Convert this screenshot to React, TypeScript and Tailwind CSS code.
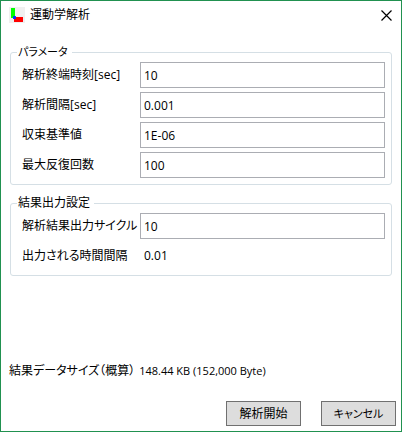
import { useState } from 'react';
import type { ReactNode } from 'react';

const parameterFields = [
  { id: 'endTime', label: '解析終端時刻[sec]', value: '10' },
  { id: 'interval', label: '解析間隔[sec]', value: '0.001' },
  { id: 'tolerance', label: '収束基準値', value: '1E-06' },
  { id: 'maxIterations', label: '最大反復回数', value: '100' },
];

function AppIcon() {
  return (
    <svg width="16" height="16" viewBox="0 0 16 16" aria-hidden="true">
      <rect width="16" height="16" fill="#f0f0f0" />
      <rect x="2" y="1" width="4" height="10" fill="#00ff00" />
      <rect x="5" y="10" width="9" height="5" fill="#ff0000" />
      <rect x="4" y="9" width="3" height="3" rx="0.5" fill="#0033ff" />
    </svg>
  );
}

function GroupBox({ title, children }: { title: ReactNode; children: ReactNode }) {
  return (
    <fieldset className="min-w-0 rounded-[3px] border border-[#d5dfe5] px-1.5 pt-0.5 pb-1.5">
      <legend className="pr-1 pl-px leading-4 [font-feature-settings:'palt']">
        {title}
      </legend>
      <div className="flex flex-col gap-1">{children}</div>
    </fieldset>
  );
}

function Field({ id, label, value }: { id: string; label: string; value: string }) {
  const [text, setText] = useState(value);

  return (
    <div className="flex items-center pl-[5px]">
      <label
        htmlFor={id}
        className="w-[118px] shrink-0 whitespace-nowrap [font-feature-settings:'palt']"
      >
        {label}
      </label>
      <input
        id={id}
        type="text"
        value={text}
        onChange={(e) => setText(e.target.value)}
        className="h-[26px] min-w-0 flex-1 border border-[#abadb3] bg-white px-[3px] outline-none focus:border-[#569de5]"
      />
    </div>
  );
}

export default function App() {
  return (
    <div className="flex min-h-screen flex-col border border-[#219150] bg-white font-['Open_Sans','Noto_Sans_CJK_JP',sans-serif] text-[12px] leading-4 text-black">
      <header className="flex h-7 items-center gap-[5px] pr-2 pl-2">
        <AppIcon />
        <h1 className="flex-1">運動学解析</h1>
        <button type="button" aria-label="閉じる" className="p-px">
          <svg width="11" height="11" viewBox="0 0 11 11" aria-hidden="true">
            <path
              d="M0.5 0.5L10.5 10.5M10.5 0.5L0.5 10.5"
              stroke="#000"
              strokeWidth="1.2"
            />
          </svg>
        </button>
      </header>

      <form
        className="flex flex-1 flex-col pt-[15px]"
        onSubmit={(e) => e.preventDefault()}
      >
        <div className="flex flex-col gap-2.5 px-[9px]">
          <GroupBox title={<span className="text-[11px]">パラメータ</span>}>
            {parameterFields.map((field) => (
              <Field key={field.id} {...field} />
            ))}
          </GroupBox>
          <GroupBox title="結果出力設定">
            <Field id="cycle" label="解析結果出力サイクル" value="10" />
            <div className="flex h-[26px] items-center pl-[5px]">
              <span className="w-[118px] shrink-0 whitespace-nowrap [font-feature-settings:'palt']">
                出力される時間間隔
              </span>
              <output htmlFor="cycle" className="pl-1">
                0.01
              </output>
            </div>
          </GroupBox>
        </div>

        <p className="mt-auto flex items-center gap-1 px-2 pt-6">
          <span className="[font-feature-settings:'palt']">
            結果データサイズ（概算）
          </span>
          <span className="text-[11px]">148.44 KB (152,000 Byte)</span>
        </p>

        <div className="flex justify-end gap-5 pt-[22px] pr-[5px] pb-[5px]">
          <button
            type="submit"
            className="h-[25px] w-[75px] border border-[#707070] bg-[#dddddd]"
          >
            解析開始
          </button>
          <button
            type="button"
            className="h-[25px] w-[75px] border border-[#707070] bg-[#dddddd] text-[11px] [font-feature-settings:'palt']"
          >
            キャンセル
          </button>
        </div>
      </form>
    </div>
  );
}
